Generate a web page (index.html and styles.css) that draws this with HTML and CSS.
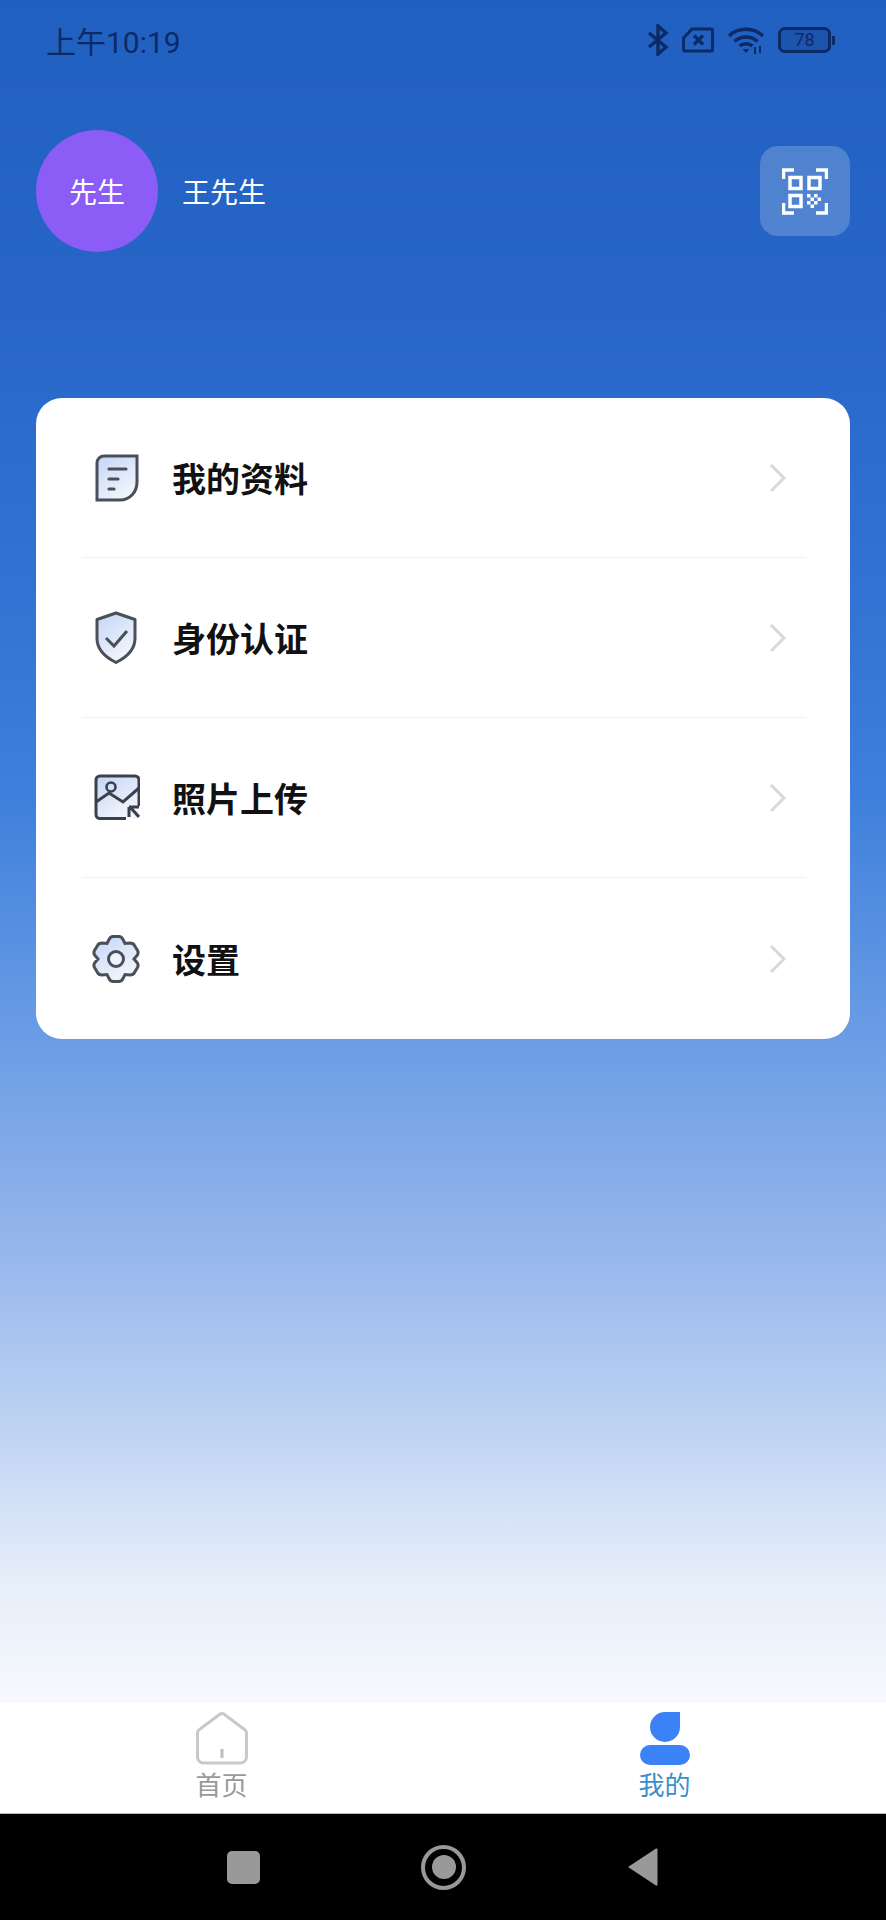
FILE: index.html
```html
<!DOCTYPE html>
<html lang="zh-CN">
<head>
    <meta charset="UTF-8">
    <meta name="viewport" content="width=device-width, initial-scale=1.0">
    <title>我的</title>
    <link rel="stylesheet" href="styles.css">
</head>
<body>
    <div class="screen">
        <!-- 状态栏 -->
        <div class="status-bar">
            <span class="status-time">上午10:19</span>
            <div class="status-icons">
                <svg width="22" height="32" viewBox="0 0 22 32" fill="none" stroke="#0d2a66" stroke-width="3.4">
                    <path d="M2 9l17 14-8 7V2l8 7L2 23"/>
                </svg>
                <svg width="32" height="26" viewBox="0 0 32 26" fill="none" stroke="#0d2a66" stroke-width="3">
                    <path d="M10 2h19a1.500 1.500 0 0 1 1.500 1.500v19a1.500 1.500 0 0 1-1.500 1.500H3a1.500 1.500 0 0 1-1.500-1.500V11z"/>
                    <path d="M12 8.500l9 9M21 8.500l-9 9" stroke-width="3.200"/>
                </svg>
                <svg width="38" height="29" viewBox="0 0 38 29" fill="none" stroke="#0d2a66" stroke-width="3.400">
                    <path d="M2 10c9-9 25-9 34 0"/>
                    <path d="M7.500 15.500c6.500-6 16.500-6 23 0"/>
                    <path d="M12.500 20c3.500-3 9.500-3 13 0"/>
                    <path d="M15.500 23l3.500 4 3.500-4z" fill="#0d2a66" stroke="none"/>
                    <path d="M28 21v7M33 20v7" stroke-width="2"/>
                </svg>
                <div class="battery">
                    <div class="battery-body">78</div>
                    <div class="battery-nub"></div>
                </div>
            </div>
        </div>

        <!-- 用户信息 -->
        <div class="profile">
            <div class="avatar">先生</div>
            <span class="profile-name">王先生</span>
            <div class="qr-button">
                <svg width="46" height="47" viewBox="0 0 46 47" fill="none" stroke="#fff">
                    <path d="M1.500 11V2H12" stroke-width="3.500"/>
                    <path d="M44.500 11V2H34" stroke-width="3.500"/>
                    <path d="M1.500 35v10H12" stroke-width="3.500"/>
                    <path d="M44.500 35v10H34" stroke-width="3.500"/>
                    <rect x="8" y="9.500" width="11" height="11" stroke-width="3.500"/>
                    <rect x="27" y="9.500" width="11" height="11" stroke-width="3.500"/>
                    <rect x="8" y="27.500" width="11" height="11" stroke-width="3.500"/>
                    <path d="M25 26h3.500v3.500H25zM32 26h3.500v3.500H32zM28.500 29.500H32V33h-3.500zM35.500 29.500H39V33h-3.500zM25 33h3.500v3.500H25zM32 33h3.500v3.500H32zM28.500 36.500H32V40h-3.500z" fill="#fff" stroke="none"/>
                </svg>
            </div>
        </div>

        <!-- 菜单 -->
        <div class="menu-card">
            <div class="menu-row">
                <svg class="menu-icon" width="48" height="50" viewBox="0 0 48 50">
                    <defs>
                        <linearGradient id="iconFill" x1="0" y1="0" x2="0.6" y2="1">
                            <stop offset="0" stop-color="#c3d5f6"/>
                            <stop offset="1" stop-color="#f2f6fd"/>
                        </linearGradient>
                    </defs>
                    <path d="M12 3h33v26c0 10-7 18-17 18H5V10c0-4 3-7 7-7z" fill="url(#iconFill)" stroke="#4a4f5b" stroke-width="3"/>
                    <path d="M17 16h17M17 26h9M17 36h5" fill="none" stroke="#4a4f5b" stroke-width="3.200" stroke-linecap="round"/>
                </svg>
                <span class="menu-text">我的资料</span>
                <svg class="menu-arrow" width="18" height="30" viewBox="0 0 18 30" fill="none" stroke="#d9d9d9" stroke-width="3">
                    <path d="M2 2l13 13L2 28"/>
                </svg>
            </div>
            <div class="menu-row">
                <svg class="menu-icon" width="48" height="54" viewBox="0 0 48 54">
                    <path d="M24 2l19 6.500v19c0 11-9 19-19 24C14 46.500 5 38.500 5 27.500v-19z" fill="url(#iconFill)" stroke="#4a4f5b" stroke-width="3" stroke-linejoin="round"/>
                    <path d="M14 27l8 8 13-15" fill="none" stroke="#4a4f5b" stroke-width="3"/>
                </svg>
                <span class="menu-text">身份认证</span>
                <svg class="menu-arrow" width="18" height="30" viewBox="0 0 18 30" fill="none" stroke="#d9d9d9" stroke-width="3">
                    <path d="M2 2l13 13L2 28"/>
                </svg>
            </div>
            <div class="menu-row">
                <svg class="menu-icon" width="48" height="48" viewBox="0 0 48 48">
                    <rect x="4" y="2" width="43" height="43" rx="4" fill="url(#iconFill)"/>
                    <path d="M34 44.500H8a4 4 0 0 1-4-4V6a4 4 0 0 1 4-4h35a4 4 0 0 1 4 4v26" fill="none" stroke="#3c404b" stroke-width="3"/>
                    <circle cx="19" cy="13" r="4.500" fill="none" stroke="#3c404b" stroke-width="2.600"/>
                    <path d="M4 28l13-9 14 9 16-14" fill="none" stroke="#3c404b" stroke-width="3"/>
                    <path d="M38 36v-3h-1M38 33h9M38 33l9 10" fill="none" stroke="#3c404b" stroke-width="3"/>
                    <path d="M37 33v10" fill="none" stroke="#3c404b" stroke-width="3"/>
                </svg>
                <span class="menu-text">照片上传</span>
                <svg class="menu-arrow" width="18" height="30" viewBox="0 0 18 30" fill="none" stroke="#d9d9d9" stroke-width="3">
                    <path d="M2 2l13 13L2 28"/>
                </svg>
            </div>
            <div class="menu-row">
                <svg class="menu-icon" width="48" height="50" viewBox="0 0 48 50">
                    <path d="M17 5.500c1-2 2-3 4-3h6c2 0 3 1 4 3l2 4 5-.5c2 0 3.500.5 4.500 2.500l3 5c1 2 .8 3.500-.5 5L42 25l3 3.500c1.300 1.500 1.500 3 .5 5l-3 5c-1 2-2.500 2.500-4.500 2.500l-5-.5-2 4c-1 2-2 3-4 3h-6c-2 0-3-1-4-3l-2-4-5 .5c-2 0-3.500-.5-4.500-2.500l-3-5c-1-2-.8-3.500.5-5L6 25l-3-3.500c-1.300-1.500-1.500-3-.5-5l3-5C6.500 9.500 8 9 10 9l5 .5z" fill="url(#iconFill)" stroke="#4a4f5b" stroke-width="3"/>
                    <circle cx="24" cy="25" r="7.500" fill="#eef3fc" stroke="#4a4f5b" stroke-width="3"/>
                </svg>
                <span class="menu-text">设置</span>
                <svg class="menu-arrow" width="18" height="30" viewBox="0 0 18 30" fill="none" stroke="#d9d9d9" stroke-width="3">
                    <path d="M2 2l13 13L2 28"/>
                </svg>
            </div>
        </div>

        <!-- 底部导航 -->
        <div class="tab-bar">
            <div class="tab-item">
                <svg width="54" height="54" viewBox="0 0 54 54" fill="none" stroke="#c9c9c9" stroke-width="3">
                    <path d="M24.500 3.500a4 4 0 0 1 5 0l20 15a4 4 0 0 1 2 3.500v24a6 6 0 0 1-6 6H8.500a6 6 0 0 1-6-6V22a4 4 0 0 1 2-3.500z"/>
                    <path d="M27 38v9" stroke="#bdbdbd"/>
                </svg>
                <span class="tab-label">首页</span>
            </div>
            <div class="tab-item tab-active">
                <svg width="54" height="54" viewBox="0 0 54 54" fill="#3b82f6">
                    <path d="M26 1h16v15a15 15 0 1 1-15-15z"/>
                    <rect x="2" y="34" width="50" height="20" rx="10"/>
                </svg>
                <span class="tab-label">我的</span>
            </div>
        </div>

        <!-- 系统导航 -->
        <div class="nav-bar">
            <div class="nav-square"></div>
            <div class="nav-circle"><div class="nav-dot"></div></div>
            <svg width="32" height="40" viewBox="0 0 32 40">
                <path d="M1 20L29 1.500q1.500-.5 1.500 1v35q0 1.500-1.500 1z" fill="#999"/>
            </svg>
        </div>
    </div>
</body>
</html>
```

FILE: styles.css
```css
body {
    margin: 0;
    padding: 0;
    font-family: "Noto Sans CJK SC", "Noto Sans", sans-serif;
}

.screen {
    width: 886px;
    height: 1920px;
    display: flex;
    flex-direction: column;
    background: linear-gradient(180deg, #2060c0 0%, #2766c8 300px, #3273d3 600px, #3f80dc 800px, #6b9de5 1040px, #9ab9ec 1270px, #bcd2f2 1420px, #e6eefa 1580px, #f7f9fd 1703px);
}

.status-bar {
    height: 80px;
    padding: 0 51px 0 46px;
    display: flex;
    align-items: center;
    justify-content: space-between;
    color: #0d2a66;
}

.status-time {
    font-family: Roboto, "Noto Sans CJK SC", sans-serif;
    font-size: 30px;
}

.status-icons {
    display: flex;
    align-items: center;
    gap: 13px;
}

.battery {
    display: flex;
    align-items: center;
}

.battery-body {
    width: 47px;
    height: 20px;
    border: 3px solid #0d2a66;
    border-radius: 7px;
    background: rgba(13, 42, 102, 0.2);
    font-family: Roboto, sans-serif;
    font-size: 18px;
    line-height: 20px;
    text-align: center;
}

.battery-nub {
    width: 3px;
    height: 9px;
    margin-left: 1px;
    background: #0d2a66;
}

.profile {
    margin-top: 50px;
    padding: 0 36px;
    display: flex;
    align-items: center;
}

.avatar {
    width: 122px;
    height: 122px;
    border-radius: 50%;
    background-color: #8b5cf6;
    color: #fff;
    font-size: 28px;
    display: flex;
    align-items: center;
    justify-content: center;
}

.profile-name {
    margin-left: 24px;
    color: #fff;
    font-size: 28px;
}

.qr-button {
    margin-left: auto;
    width: 90px;
    height: 90px;
    border-radius: 18px;
    background-color: rgba(255, 255, 255, 0.2);
    display: flex;
    align-items: center;
    justify-content: center;
}

.menu-card {
    margin: 146px 36px 0;
    padding: 0 44px 0 46px;
    background-color: #fff;
    border-radius: 26px;
}

.menu-row {
    height: 160px;
    padding: 0 19px 0 10px;
    display: flex;
    align-items: center;
    border-bottom: 1px solid #f0f0f0;
    box-sizing: border-box;
}

.menu-row:last-child {
    border-bottom: none;
    height: 161px;
}

.menu-icon {
    flex: none;
}

.menu-text {
    margin-left: 32px;
    font-size: 34px;
    font-weight: 700;
    color: #111;
}

.menu-arrow {
    margin-left: auto;
}

.tab-bar {
    margin-top: auto;
    height: 110px;
    background-color: #fff;
    border-bottom: 1px solid #bbb;
    box-sizing: content-box;
    display: flex;
}

.tab-item {
    flex: 1;
    padding-top: 8px;
    display: flex;
    flex-direction: column;
    align-items: center;
    color: #999;
}

.tab-active {
    color: #3a8fc9;
}

.tab-label {
    font-size: 26px;
    line-height: 38px;
}

.nav-bar {
    height: 106px;
    padding: 0 227px;
    background-color: #000;
    display: flex;
    align-items: center;
    justify-content: space-between;
}

.nav-square {
    width: 33px;
    height: 33px;
    border-radius: 5px;
    background-color: #999;
}

.nav-circle {
    width: 37px;
    height: 37px;
    border: 4px solid #999;
    border-radius: 50%;
    display: flex;
    align-items: center;
    justify-content: center;
}

.nav-dot {
    width: 24px;
    height: 24px;
    border-radius: 50%;
    background-color: #999;
}
```
